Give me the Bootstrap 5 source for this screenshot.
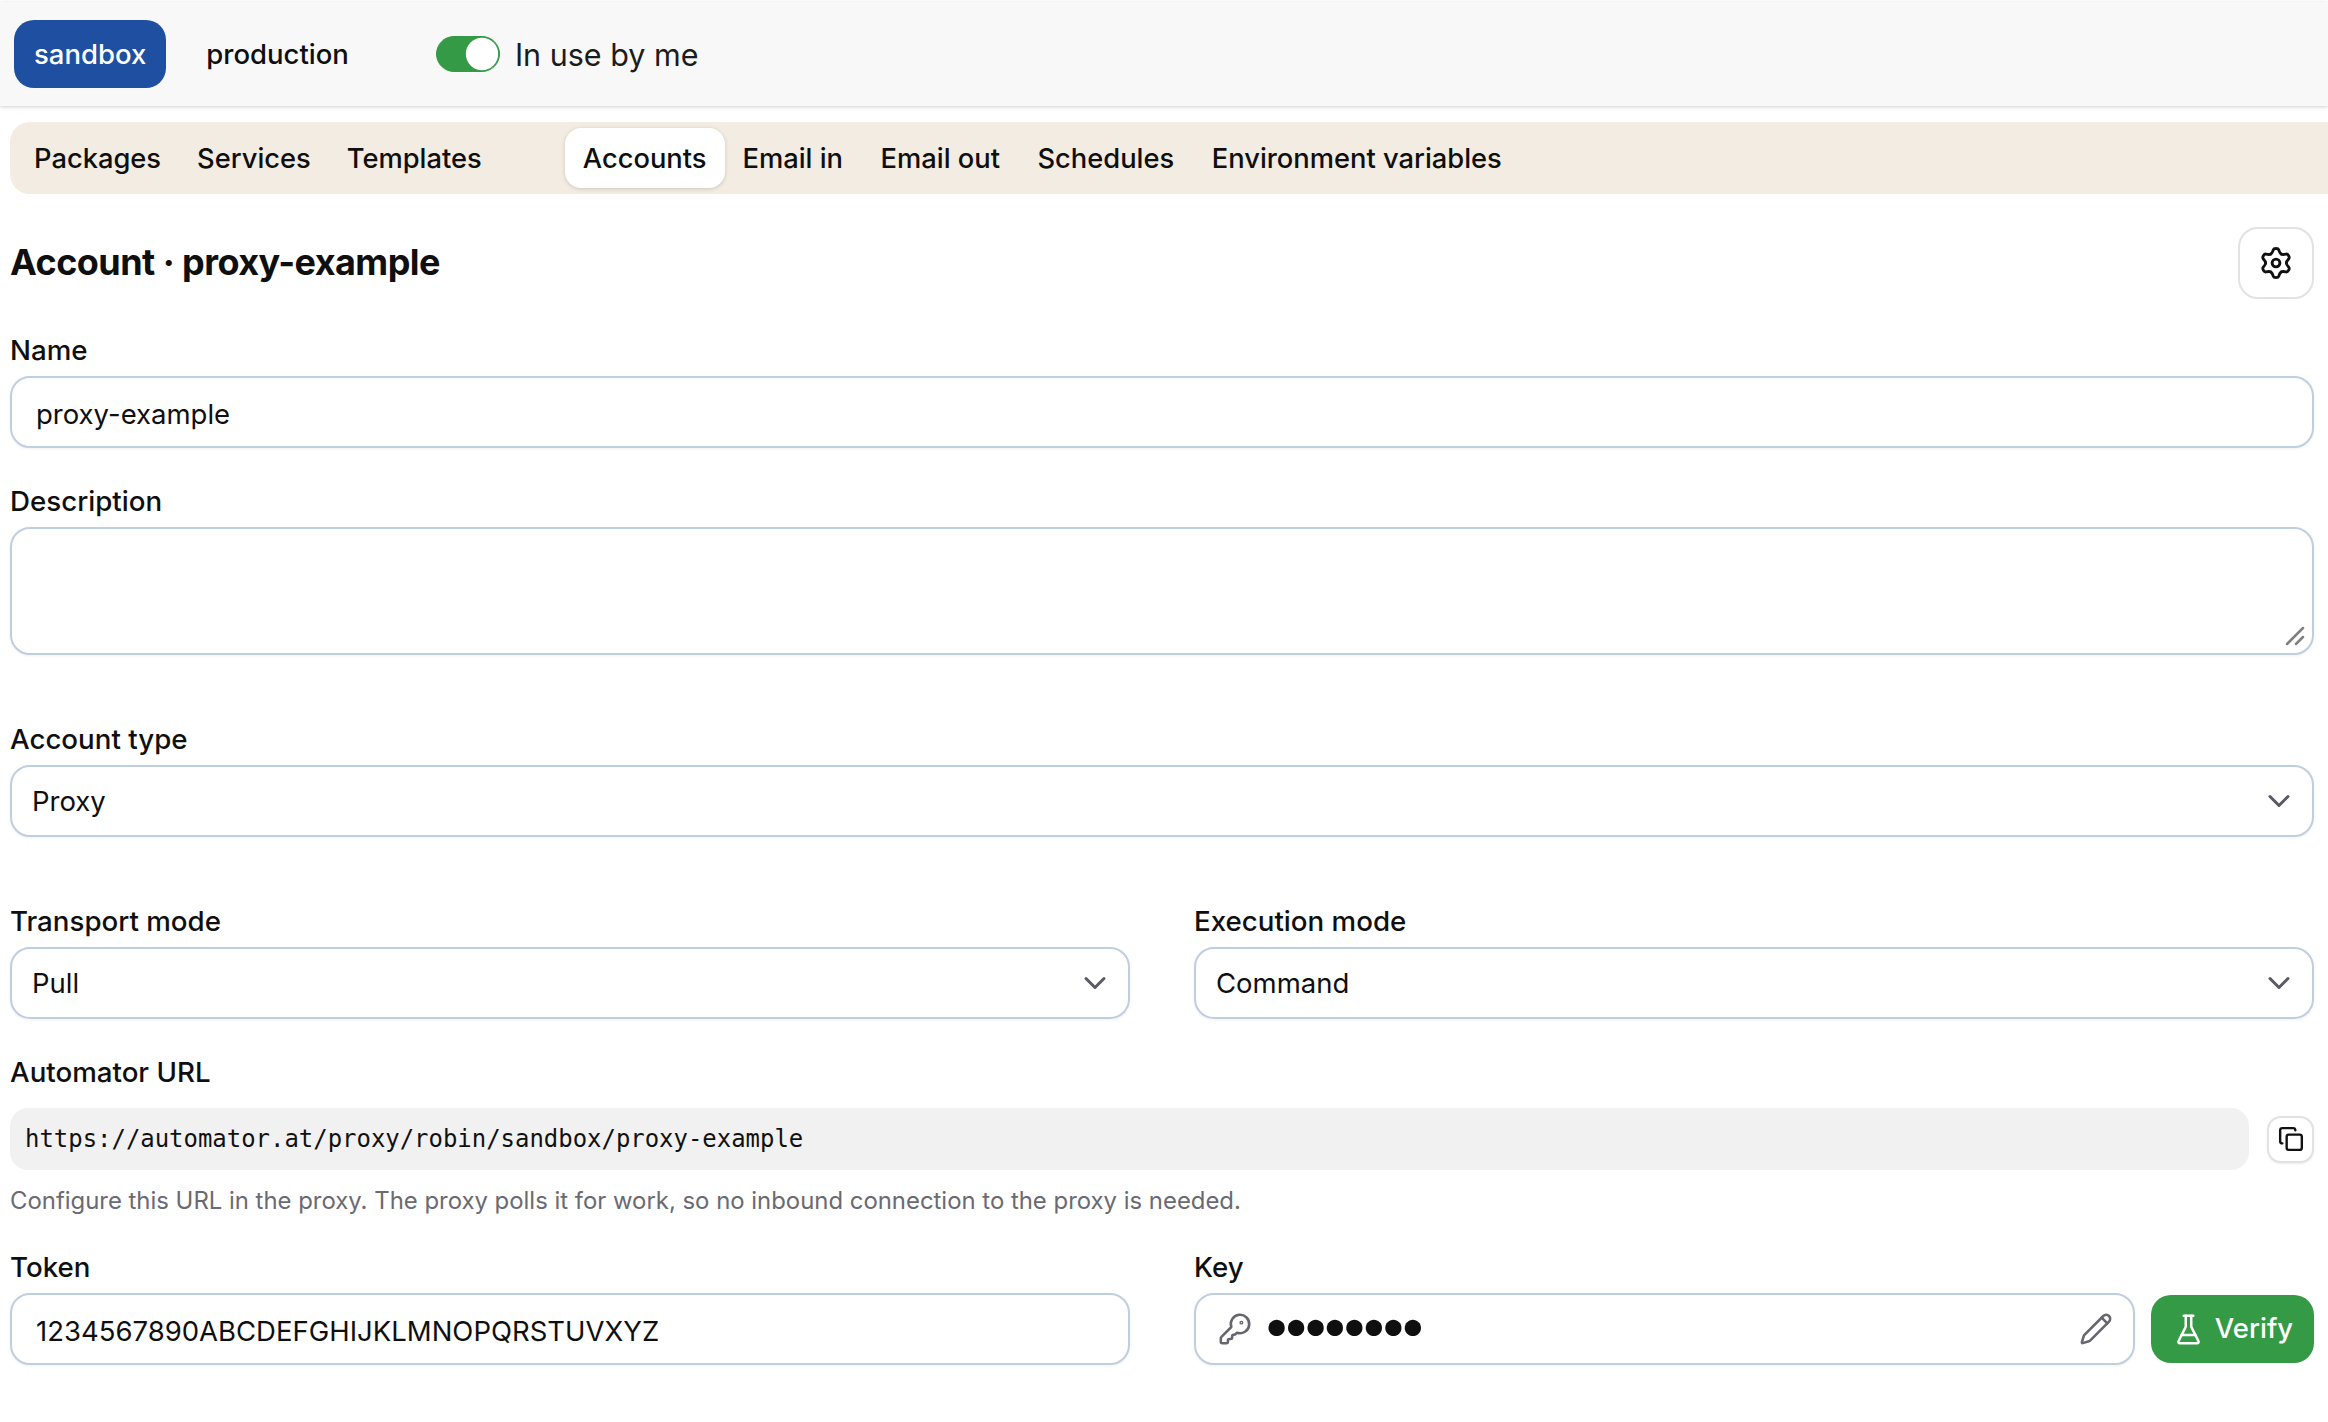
<!DOCTYPE html>
<html lang="en">
<head>
  <meta charset="UTF-8" />
  <meta name="viewport" content="width=device-width, initial-scale=1.0" />
  <title>Account - proxy-example</title>
  <link href="https://cdn.jsdelivr.net/npm/bootstrap@5.3.2/dist/css/bootstrap.min.css" rel="stylesheet" />
  <style>
    body {
      font-family: Inter, "Liberation Sans", sans-serif;
      font-size: 27.5px;
      color: #0f0f0f;
      background: #fff;
      min-height: 1422px;
    }

    .env-bar {
      margin-top: 2px;
      height: 104px;
      background: #f8f8f8;
      box-shadow: 0 1px 4px rgba(0,0,0,0.18);
      padding-left: 14px;
    }

    .env-btn {
      font-size: 27.5px;
      font-weight: 500;
      line-height: 1;
      height: 68px;
      padding: 2px 20px 0;
      border-radius: 20px;
      border: 0;
      color: #0f0f0f;
      background: transparent;
    }

    .env-btn.on { background: #1f4fa0; color: #fff; }
    .env-btn + .env-btn { margin-left: 20px; }

    .use-switch {
      margin: 0 0 0 67px;
      padding: 0;
      min-height: 0;
      display: flex;
      align-items: center;
      gap: 15px;
    }

    .use-switch .form-check-input,
    .use-switch .form-check-input:focus {
      float: none;
      margin: 0;
      width: 64px;
      height: 36px;
      background-color: #359a45;
      border-color: #359a45;
      background-image: url("data:image/svg+xml,%3csvg xmlns='http://www.w3.org/2000/svg' viewBox='-4 -4 8 8'%3e%3ccircle r='3.800' fill='%23fff'/%3e%3c/svg%3e");
    }

    .use-switch .form-check-label { font-size: 30.5px; font-weight: 400; color: #1c1c1c; padding-top: 2px; }

    .page-body { padding: 16px 14px 0 10px; }

    .tab-strip {
      margin-right: -14px;
      height: 72px;
      background: #f3ece2;
      border-radius: 20px 0 0 20px;
      padding: 0 0 0 6px;
      align-items: center;
      flex-wrap: nowrap;
    }

    .tab-strip .nav-link {
      font-size: 27.3px;
      font-weight: 500;
      line-height: 1;
      color: #0f0f0f;
      height: 60px;
      padding: 17px 18px 0;
      border-radius: 16px;
      display: block;
      background: transparent;
    }

    .tab-strip .nav-link.active {
      background: #fff;
      color: #0f0f0f;
      box-shadow: 0 1px 4px rgba(0,0,0,0.16);
    }

    .tab-strip .tab-gap { margin-left: 65px; }
    .tab-strip .tab-after { margin-left: 1.5px; }

    .title-row { margin: 33px 0 34px; height: 72px; }

    .acct-title { font-size: 36px; font-weight: 700; letter-spacing: -0.55px; margin: 0; }

    .icon-btn {
      width: 76px;
      height: 72px;
      padding: 0;
      border-radius: 20px;
      border: 2px solid #e2e2e2;
      background: #fff;
      display: flex;
      align-items: center;
      justify-content: center;
    }

    .icon-btn.tiny { width: 47px; height: 47px; border-radius: 14px; box-shadow: 0 1px 2px rgba(0,0,0,0.08); }

    .field-label { font-size: 27.7px; font-weight: 500; line-height: 34px; margin: 0 0 9px; display: block; }
    .url-label { margin-bottom: 19px; }

    .field-gap { margin-top: 36px; }
    .field-gap-wide { margin-top: 67px; }
    .field-gap-token { margin-top: 34px; }

    .two-up { --bs-gutter-x: 64px; }

    .field-input, .field-input:focus {
      font-size: 27.5px;
      line-height: 34px;
      color: #0f0f0f;
      height: 72px;
      padding: 17px 24px;
      border: 2px solid #c0cfe0;
      border-radius: 20px;
      box-shadow: 0 1px 3px rgba(0,0,0,0.06);
    }

    input.field-input { padding-top: 19px; padding-bottom: 15px; }

    textarea.field-input { height: 128px; resize: none; }

    .desc-wrap { position: relative; }
    .desc-grip { position: absolute; right: 9px; bottom: 9px; pointer-events: none; }

    .field-select, .field-select:focus {
      padding-left: 20px;
      background-image: url("data:image/svg+xml,%3csvg xmlns='http://www.w3.org/2000/svg' viewBox='0 0 16 16'%3e%3cpath fill='none' stroke='%235a5a66' stroke-linecap='round' stroke-linejoin='round' stroke-width='2' d='m2 5 6 6 6-6'/%3e%3c/svg%3e");
      background-size: 24px 24px;
      background-position: right 21px center;
    }

    .url-box {
      font-family: "DejaVu Sans Mono", monospace;
      font-size: 23.95px;
      line-height: 62px;
      height: 62px;
      padding: 0 15px;
      background: #f1f1f1;
      border-radius: 18px;
      color: #111;
      white-space: nowrap;
    }

    .url-copy { margin-left: 18px; }

    .help-line { font-size: 23.9px; line-height: 30px; color: #6a6a72; margin: 16px 0 0; }

    .key-box { display: flex; align-items: center; gap: 10px; padding: 0 20px 0 22px; }
    .key-box .key-dots { flex: 1; font-size: 52px; letter-spacing: -9.8px; line-height: 1; padding-bottom: 8px; color: #0f0f0f; }

    .verify-btn {
      font-size: 27.5px;
      font-weight: 500;
      height: 68px;
      width: 163px;
      padding: 0;
      border: 0;
      border-radius: 20px;
      background: #359a45;
      color: #fff;
      display: flex;
      align-items: center;
      justify-content: center;
      gap: 10px;
    }
  </style>
</head>
<body>

  <div class="env-bar d-flex align-items-center">
    <button type="button" class="btn env-btn on">sandbox</button>
    <button type="button" class="btn env-btn">production</button>
    <div class="form-check form-switch use-switch">
      <input class="form-check-input" type="checkbox" role="switch" id="inUse" checked />
      <label class="form-check-label" for="inUse">In use by me</label>
    </div>
  </div>

  <div class="page-body">
    <ul class="nav tab-strip">
      <li class="nav-item"><a class="nav-link" href="#">Packages</a></li>
      <li class="nav-item"><a class="nav-link" href="#">Services</a></li>
      <li class="nav-item"><a class="nav-link" href="#">Templates</a></li>
      <li class="nav-item tab-gap"><a class="nav-link active" href="#">Accounts</a></li>
      <li class="nav-item"><a class="nav-link" href="#">Email in</a></li>
      <li class="nav-item tab-after"><a class="nav-link" href="#">Email out</a></li>
      <li class="nav-item tab-after"><a class="nav-link" href="#">Schedules</a></li>
      <li class="nav-item tab-after"><a class="nav-link" href="#">Environment variables</a></li>
    </ul>

    <div class="title-row d-flex align-items-center justify-content-between">
      <h1 class="acct-title">Account · proxy-example</h1>
      <button type="button" class="icon-btn" aria-label="Settings">
        <svg width="36" height="36" viewBox="0 0 24 24" fill="none" stroke="#111" stroke-width="1.900" stroke-linejoin="round" stroke-linecap="round">
          <defs>
            <path id="gearTooth" d="M8.550 6.020C9.420 5.520 9.900 4.200 10.200 3.200c.4-1.200 3.200-1.200 3.600 0 .3 1 .78 2.320 1.650 2.820"/>
          </defs>
          <use href="#gearTooth"/>
          <use href="#gearTooth" transform="rotate(60 12 12)"/>
          <use href="#gearTooth" transform="rotate(120 12 12)"/>
          <use href="#gearTooth" transform="rotate(180 12 12)"/>
          <use href="#gearTooth" transform="rotate(240 12 12)"/>
          <use href="#gearTooth" transform="rotate(300 12 12)"/>
          <circle cx="12" cy="12" r="2.600"/>
        </svg>
      </button>
    </div>

    <form>
      <div>
        <label class="field-label" for="acctName">Name</label>
        <input type="text" id="acctName" class="form-control field-input" value="proxy-example" />
      </div>

      <div class="field-gap">
        <label class="field-label" for="acctDesc">Description</label>
        <div class="desc-wrap">
          <textarea id="acctDesc" class="form-control field-input"></textarea>
          <svg class="desc-grip" width="20" height="20" viewBox="0 0 20 20" fill="none" stroke="#808080" stroke-width="2.500" stroke-linecap="round">
            <path d="M2 18 18 2M11 18l7-7"/>
          </svg>
        </div>
      </div>

      <div class="field-gap-wide">
        <label class="field-label" for="acctType">Account type</label>
        <select id="acctType" class="form-select field-input field-select"><option>Proxy</option></select>
      </div>

      <div class="row two-up field-gap-wide">
        <div class="col-6">
          <label class="field-label" for="transport">Transport mode</label>
          <select id="transport" class="form-select field-input field-select"><option>Pull</option></select>
        </div>
        <div class="col-6">
          <label class="field-label" for="execution">Execution mode</label>
          <select id="execution" class="form-select field-input field-select"><option>Command</option></select>
        </div>
      </div>

      <div class="field-gap">
        <label class="field-label url-label">Automator URL</label>
        <div class="d-flex align-items-center justify-content-between">
          <div class="url-box flex-grow-1">https://automator.at/proxy/robin/sandbox/proxy-example</div>
          <button type="button" class="icon-btn tiny url-copy" aria-label="Copy">
            <svg width="26" height="26" viewBox="0 0 24 24" fill="none" stroke="#111" stroke-width="2.200" stroke-linecap="round" stroke-linejoin="round">
              <rect x="8" y="8" width="14" height="14" rx="2"/>
              <path d="M4 16c-1.100 0-2-.9-2-2V4c0-1.100.9-2 2-2h10c1.100 0 2 .9 2 2"/>
            </svg>
          </button>
        </div>
        <p class="help-line">Configure this URL in the proxy. The proxy polls it for work, so no inbound connection to the proxy is needed.</p>
      </div>

      <div class="row two-up field-gap-token">
        <div class="col-6">
          <label class="field-label" for="token">Token</label>
          <input type="text" id="token" class="form-control field-input" value="1234567890ABCDEFGHIJKLMNOPQRSTUVXYZ" />
        </div>
        <div class="col-6">
          <label class="field-label">Key</label>
          <div class="d-flex align-items-center">
            <div class="form-control field-input key-box flex-grow-1">
              <svg width="34" height="34" viewBox="0 0 24 24" fill="none" stroke="#66666e" stroke-width="1.800" stroke-linejoin="round" stroke-linecap="round" class="flex-shrink-0">
                <path d="M2.586 17.414A2 2 0 0 0 2 18.828V21a1 1 0 0 0 1 1h3a1 1 0 0 0 1-1v-1a1 1 0 0 1 1-1h1a1 1 0 0 0 1-1v-1a1 1 0 0 1 1-1h.172a2 2 0 0 0 1.414-.586l.814-.814a6.500 6.500 0 1 0-4-4z"/>
                <circle cx="16.500" cy="7.500" r=".5"/>
              </svg>
              <span class="key-dots">••••••••</span>
              <svg width="34" height="34" viewBox="0 0 24 24" fill="none" stroke="#66666e" stroke-width="1.800" stroke-linejoin="round" stroke-linecap="round" class="flex-shrink-0">
                <path d="M21.174 6.812a1 1 0 0 0-3.986-3.987L3.842 16.174a2 2 0 0 0-.5.83l-1.321 4.352a.5.5 0 0 0 .623.622l4.353-1.320a2 2 0 0 0 .83-.497z"/>
                <path d="m16 4 4 4"/>
              </svg>
            </div>
            <button type="button" class="btn verify-btn flex-shrink-0 ms-3">
              <svg width="33" height="33" viewBox="0 0 24 24" fill="none" stroke="#fff" stroke-width="1.800" stroke-linejoin="round" stroke-linecap="round">
                <path d="M10 2v7.527a2 2 0 0 1-.211.896L4.720 20.550a1 1 0 0 0 .9 1.450h12.760a1 1 0 0 0 .9-1.450l-5.069-10.127A2 2 0 0 1 14 9.527V2"/>
                <path d="M8.500 2h7M7 16h10"/>
              </svg>
              Verify
            </button>
          </div>
        </div>
      </div>
    </form>
  </div>

  <script src="https://cdn.jsdelivr.net/npm/bootstrap@5.3.2/dist/js/bootstrap.bundle.min.js"></script>
</body>
</html>
